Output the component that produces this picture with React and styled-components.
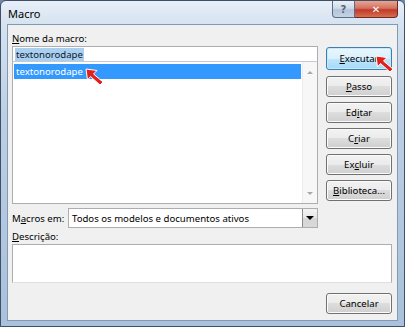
import React from "react";
import styled, { createGlobalStyle } from "styled-components";

const GlobalStyle = createGlobalStyle`
  html, body {
    margin: 0;
    padding: 0;
    width: 405px;
    height: 327px;
    overflow: hidden;
    background: #6f8aa8;
  }
  body {
    font-family: "Noto Sans", "Segoe UI", sans-serif;
    font-size: 9.6px;
    color: #000;
  }
`;

const Window = styled.div`
  position: relative;
  width: 405px;
  height: 327px;
  box-sizing: border-box;
  border: 1px solid #3e4f66;
  border-radius: 6px 6px 0 0;
  background: linear-gradient(
    180deg,
    #e8eff8 0%,
    #d6e3f0 7%,
    #bccfe4 35%,
    #a9c1dc 100%
  );
  display: flex;
  flex-direction: column;
  padding: 0 6px 6px 6px;
  overflow: hidden;
`;

const TitleBar = styled.div`
  height: 23px;
  display: flex;
  align-items: flex-start;
`;

const Title = styled.div`
  padding-left: 1px;
  line-height: 25px;
  font-size: 11px;
  color: #000;
`;

const TitleButtons = styled.div`
  margin-left: auto;
  display: flex;
`;

const CaptionButton = styled.div`
  width: ${(p) => (p.$close ? 43 : 23)}px;
  height: 17px;
  box-sizing: border-box;
  display: flex;
  align-items: center;
  justify-content: center;
  border: 1px solid ${(p) => (p.$close ? "#6e2a22" : "#5b6d84")};
  border-top: none;
  border-radius: ${(p) => (p.$close ? "0 0 4px 0" : "0 0 0 4px")};
  border-left: ${(p) => (p.$close ? "none" : "1px solid #5b6d84")};
  background: ${(p) =>
    p.$close
      ? "linear-gradient(180deg, #e8a493 0%, #d4725f 45%, #c0392b 55%, #d5704d 100%)"
      : "linear-gradient(180deg, #e9eff6 0%, #cfdbe9 45%, #b3c5da 55%, #c4d3e4 100%)"};
  color: ${(p) => (p.$close ? "#fff" : "#55657a")};
  font-weight: bold;
  font-size: 10px;
  font-family: "DejaVu Sans", sans-serif;
`;

const Client = styled.div`
  flex: 1;
  box-sizing: border-box;
  background: #f0f0f0;
  border: 1px solid #8398b2;
  padding: 7px 5px 6px 4px;
  display: flex;
  flex-direction: column;
`;

const Top = styled.div`
  display: grid;
  grid-template-columns: 306px 66px;
  column-gap: 8px;
`;

const LeftCol = styled.div`
  display: flex;
  flex-direction: column;
  position: relative;
`;

const Label = styled.div`
  height: 14px;
  line-height: 14px;
  white-space: nowrap;
`;

const TextBox = styled.div`
  height: 16px;
  box-sizing: border-box;
  background: #fff;
  border: 1px solid #abadb3;
  border-bottom-color: #c5c9d2;
  display: flex;
  align-items: center;
  padding-left: 2px;
  line-height: 13px;
`;

const Selected = styled.span`
  background: #aacfef;
  color: #0b1b33;
  padding: 0 1px;
`;

const ListBox = styled.div`
  height: 142px;
  box-sizing: border-box;
  background: #fff;
  border: 1px solid #abadb3;
  border-top: none;
  display: flex;
`;

const ListItems = styled.div`
  flex: 1;
  padding: 2px 1px 0 1px;
`;

const ListItem = styled.div`
  height: 15px;
  line-height: 15px;
  padding-left: 2px;
  background: ${(p) => (p.$selected ? "#3399ff" : "transparent")};
  color: ${(p) => (p.$selected ? "#fff" : "#000")};
`;

const ScrollBar = styled.div`
  width: 15px;
  background: #f7f7f7;
  border-left: 1px solid #ececec;
  display: flex;
  flex-direction: column;
  justify-content: space-between;
  align-items: center;
  padding: 9px 0 8px;
  box-sizing: border-box;
`;

const Chevron = styled.div`
  width: 0;
  height: 0;
  border-left: 3px solid transparent;
  border-right: 3px solid transparent;
  ${(p) =>
    p.$down
      ? "border-top: 3px solid #a8a8a8;"
      : "border-bottom: 3px solid #a8a8a8;"}
`;

const ComboRow = styled.div`
  margin-top: 4px;
  height: 20px;
  display: flex;
  align-items: center;
`;

const ComboLabel = styled.div`
  width: 56px;
  white-space: nowrap;
`;

const Combo = styled.div`
  flex: 1;
  height: 20px;
  box-sizing: border-box;
  background: #fff;
  border: 1px solid #abadb3;
  display: flex;
  align-items: center;
`;

const ComboText = styled.div`
  flex: 1;
  padding-left: 3px;
`;

const DropButton = styled.div`
  width: 15px;
  height: 18px;
  box-sizing: border-box;
  border-left: 1px solid #8a8a8a;
  background: linear-gradient(180deg, #f3f3f3 0%, #e6e6e6 50%, #d6d6d6 50%, #d9d9d9 100%);
  display: flex;
  align-items: center;
  justify-content: center;
  &::after {
    content: "";
    border-left: 4px solid transparent;
    border-right: 4px solid transparent;
    border-top: 4px solid #000;
  }
`;

const RightCol = styled.div`
  padding-top: 15px;
  display: flex;
  flex-direction: column;
  gap: 5px;
  position: relative;
`;

const Button = styled.div`
  height: ${(p) => (p.$default ? 23 : 21)}px;
  width: 66px;
  box-sizing: border-box;
  border: 1px solid ${(p) => (p.$default ? "#3c7fb1" : "#707070")};
  border-radius: 3px;
  box-shadow: inset 0 0 0 1px ${(p) => (p.$default ? "#c6e8fb" : "#fbfbfb")};
  background: ${(p) =>
    p.$default
      ? "linear-gradient(180deg, #eaf6fd 0%, #d9f0fc 50%, #bee6fd 50%, #a7d9f5 100%)"
      : "linear-gradient(180deg, #f2f2f2 0%, #ebebeb 50%, #dddddd 50%, #cfcfcf 100%)"};
  display: flex;
  align-items: center;
  justify-content: center;
  line-height: 14px;
  color: #000;
  margin-bottom: ${(p) => (p.$default ? 1 : 0)}px;
`;

const DescLabel = styled(Label)`
  margin-top: 2px;
`;

const DescBox = styled.div`
  height: 39px;
  box-sizing: border-box;
  background: #fff;
  border: 1px solid #abadb3;
  border-bottom-color: #dcdfe5;
`;

const Footer = styled.div`
  margin-top: 10px;
  display: flex;
  justify-content: flex-end;
`;

const Pointer = styled.svg`
  position: absolute;
  left: ${(p) => p.$x}px;
  top: ${(p) => p.$y}px;
  width: 19px;
  height: 18px;
`;

function RedArrow({ x, y }) {
  return (
    <Pointer $x={x} $y={y} viewBox="0 0 19 18">
      <polygon
        points="1,1 12,2.5 8.5,6 18,14 15,17 5.5,8.5 2.5,12"
        fill="#e3201b"
        stroke="#ffffff"
        strokeWidth="1"
        strokeLinejoin="round"
      />
    </Pointer>
  );
}

export default function App() {
  return (
    <>
      <GlobalStyle />
      <Window>
        <TitleBar>
          <Title>Macro</Title>
          <TitleButtons>
            <CaptionButton>?</CaptionButton>
            <CaptionButton $close>✕</CaptionButton>
          </TitleButtons>
        </TitleBar>
        <Client>
          <Top>
            <LeftCol>
              <Label>
                <u>N</u>ome da macro:
              </Label>
              <TextBox>
                <Selected>textonorodape</Selected>
              </TextBox>
              <ListBox>
                <ListItems>
                  <ListItem $selected>textonorodape</ListItem>
                </ListItems>
                <ScrollBar>
                  <Chevron />
                  <Chevron $down />
                </ScrollBar>
              </ListBox>
              <ComboRow>
                <ComboLabel>
                  M<u>a</u>cros em:
                </ComboLabel>
                <Combo>
                  <ComboText>Todos os modelos e documentos ativos</ComboText>
                  <DropButton />
                </Combo>
              </ComboRow>
              <RedArrow x={73} y={36} />
            </LeftCol>
            <RightCol>
              <Button $default>
                <u>E</u>xecutar
              </Button>
              <Button>
                <u>P</u>asso
              </Button>
              <Button>
                Ed<u>i</u>tar
              </Button>
              <Button>
                C<u>r</u>iar
              </Button>
              <Button>
                Ex<u>c</u>luir
              </Button>
              <Button>
                <u>B</u>iblioteca...
              </Button>
              <RedArrow x={49} y={23} />
            </RightCol>
          </Top>
          <DescLabel>
            <u>D</u>escrição:
          </DescLabel>
          <DescBox />
          <Footer>
            <Button>Cancelar</Button>
          </Footer>
        </Client>
      </Window>
    </>
  );
}
